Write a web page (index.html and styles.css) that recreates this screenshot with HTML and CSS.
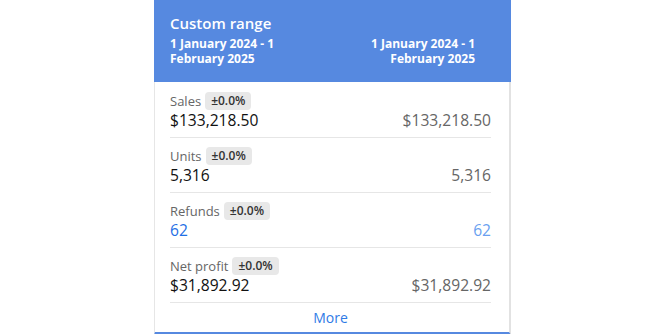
FILE: index.html
```html
<!DOCTYPE html>
<html>
<head>
<meta charset="utf-8">
<link rel="stylesheet" href="styles.css">
</head>
<body>
<div class="card">
  <div class="card-head">
    <div class="title">Custom range</div>
    <div class="ranges">
      <div class="range">1 January 2024 - 1 February 2025</div>
      <div class="range range-right">1 January 2024 - 1 February 2025</div>
    </div>
  </div>
  <div class="card-body">
    <div class="metric">
      <div class="label-row"><span class="label">Sales</span><span class="badge">±0.0%</span></div>
      <div class="value-row"><span class="value">$133,218.50</span><span class="value-prev">$133,218.50</span></div>
    </div>
    <div class="metric">
      <div class="label-row"><span class="label">Units</span><span class="badge">±0.0%</span></div>
      <div class="value-row"><span class="value">5,316</span><span class="value-prev">5,316</span></div>
    </div>
    <div class="metric">
      <div class="label-row"><span class="label">Refunds</span><span class="badge">±0.0%</span></div>
      <div class="value-row"><span class="value value-link">62</span><span class="value-prev value-link-light">62</span></div>
    </div>
    <div class="metric">
      <div class="label-row"><span class="label">Net profit</span><span class="badge">±0.0%</span></div>
      <div class="value-row"><span class="value">$31,892.92</span><span class="value-prev">$31,892.92</span></div>
    </div>
    <div class="more">More</div>
  </div>
</div>
</body>
</html>
```
FILE: styles.css
```css
html, body {
  margin: 0;
  padding: 0;
  background: #ffffff;
}
body {
  font-family: "Open Sans", "Noto Sans", sans-serif;
}
.card {
  width: 357px;
  margin-left: 154px;
  box-sizing: border-box;
  border-left: 1px solid #e6e6e6;
  border-right: 2px solid #e2e2e2;
  border-bottom: 3px solid #5689e0;
  background: #fff;
}
.card-head {
  background: #5689e0;
  color: #fff;
  margin: 0 -2px 0 -1px;
  padding: 13px 36px 10px 16px;
  height: 82px;
  box-sizing: border-box;
}
.title {
  font-size: 15px;
  font-weight: 600;
  line-height: 20px;
  margin-bottom: 3px;
}
.ranges {
  display: flex;
  justify-content: space-between;
}
.range {
  width: 118px;
  font-size: 12px;
  font-weight: 700;
  line-height: 15px;
}
.range-right {
  text-align: right;
}
.card-body {
  padding: 0 18px 0 15px;
}
.metric {
  padding: 9px 0 7px;
  border-bottom: 1px solid #e6e6e6;
}
.metric:first-child {
  padding-top: 10px;
}
.label-row {
  display: flex;
  align-items: center;
  gap: 4px;
  height: 18px;
}
.label {
  font-size: 13px;
  color: #666;
}
.badge {
  background: #e8e8e8;
  color: #333;
  font-size: 12px;
  font-weight: 600;
  line-height: 18px;
  padding: 0 6px;
  border-radius: 4px;
}
.value-row {
  display: flex;
  justify-content: space-between;
  align-items: baseline;
  line-height: 20px;
  font-size: 15.6px;
}
.value {
  color: #111;
}
.value-prev {
  color: #666;
}
.value-link {
  color: #1f6fe5;
}
.value-link-light {
  color: #6a9ff0;
}
.more {
  text-align: center;
  font-size: 14px;
  line-height: 29px;
  color: #2f7be6;
}
```
